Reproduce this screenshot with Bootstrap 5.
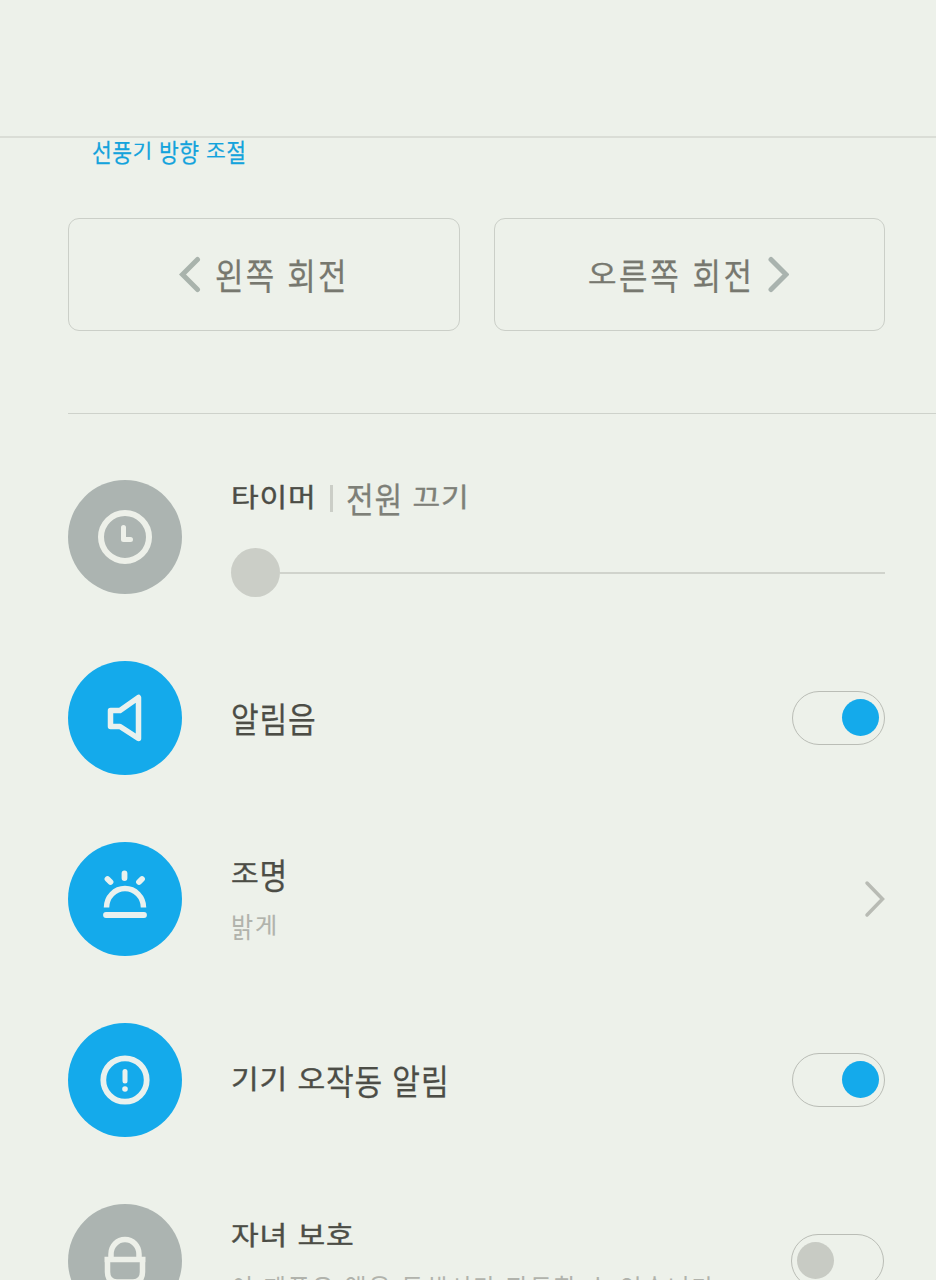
<!DOCTYPE html>
<html lang="ko">
<head>
<meta charset="utf-8">
<meta name="viewport" content="width=device-width, initial-scale=1">
<title>선풍기</title>
<link rel="stylesheet" href="https://cdn.jsdelivr.net/npm/bootstrap@5.3.0/dist/css/bootstrap.min.css">
<style>
  :root { --ink:#4c4d46; --soft:#77786f; --pale:#b1b3ac; --line:#cbcfc8; --blue:#14aaeb; --gray:#acb4b1; }
  body { background:#edf1ea; color:var(--ink); font-family:"Noto Sans CJK KR","Noto Sans",sans-serif; height:1280px; overflow:hidden; }
  .topbar { height:138px; border-bottom:2px solid #daddd6; }
  .content { padding-left:68px; }
  .inner { padding-right:51px; }
  .kr { display:inline-block; white-space:nowrap; line-height:1; transform-origin:0 50%; transform:scaleX(.86); -webkit-text-stroke:.25px currentColor; }
  .kr i { display:inline-block; font-style:normal; transform:scaleY(.76); transform-origin:50% 22%; -webkit-text-stroke:.5px currentColor; }
  .section-label { color:#14a3dc; font-size:25px; letter-spacing:.5px; height:80px; padding-left:24px; line-height:1; }
  .section-label .kr { margin-top:1px; }
  .section-label i, .sub i { -webkit-text-stroke-width:.2px; }
  .turn { height:113px; border:1.5px solid var(--line); border-radius:11px; color:var(--soft); font-size:36px; letter-spacing:2.6px; }
  .turn .kr { padding-bottom:1px; }
  .divider { height:1px; background:#ced2cb; margin-top:82px; }
  .setting { height:181px; padding-top:66px; }
  .disc { width:114px; height:114px; border-radius:50%; background:var(--blue); margin-right:49px; }
  .disc.off { background:var(--gray); }
  .disc svg { display:block; }
  .body-h { height:114px; min-width:0; }
  .title { font-size:35px; letter-spacing:1px; padding-bottom:2px; }
  .sub { font-size:28px; color:var(--pale); letter-spacing:2.2px; -webkit-text-stroke:0; }
  .bar { width:3px; height:27px; background:#cbcec7; }
  .track { height:2px; background:#d0d3cc; }
  .thumb { width:49px; height:49px; border-radius:50%; background:#cbcec7; }
  .toggle { width:93px; height:54px; border:1px solid #babdb6; border-radius:27px; padding:0 5px 1px; margin-bottom:1px; }
  .knob { width:37px; height:37px; border-radius:50%; background:var(--blue); }
  .toggle.off { margin-right:1px; }
  .toggle.off .knob { background:#c8cbc4; }
</style>
</head>
<body>
<header class="topbar"></header>
<main class="content">
  <div class="section-label"><span class="kr">선풍<i>기</i> 방향 <i>조</i>절</span></div>
  <div class="inner d-flex" style="gap:34px">
    <button class="turn btn p-0 flex-fill w-50 d-flex align-items-center">
      <svg width="22" height="38" style="margin-left:110px"><path d="M18.500 3.500L3.500 18.500L18.500 33.500" fill="none" stroke="#a9b3ac" stroke-width="5" stroke-linecap="round"/></svg>
      <span class="kr" style="margin-left:14px">왼쪽 회전</span>
    </button>
    <button class="turn btn p-0 flex-fill w-50 d-flex align-items-center">
      <span class="kr text-start" style="margin-left:93px;width:179px;letter-spacing:3px"><i>오</i>른쪽 회전</span>
      <svg width="22" height="38"><path d="M4 3.500L19 18.500L4 33.500" fill="none" stroke="#a9b3ae" stroke-width="5" stroke-linecap="round"/></svg>
    </button>
  </div>
  <div class="divider"></div>

  <section class="setting inner d-flex">
    <div class="disc off flex-shrink-0"><svg width="114" height="114" fill="none" stroke="#edf0e9"><circle cx="57" cy="57" r="24" stroke-width="6"/><path d="M55.500 47.500V59.500H62.500" stroke-width="5" stroke-linecap="round" stroke-linejoin="round"/></svg></div>
    <div class="body-h flex-grow-1">
      <div class="d-flex align-items-center" style="height:36px">
        <span class="kr title" style="width:99px"><i>타</i><i>이</i><i>머</i></span><span class="bar"></span>
        <span class="kr title" style="margin-left:13px;color:#7e8078">전원 <i>끄</i><i>기</i></span>
      </div>
      <div class="d-flex align-items-center" style="margin-top:32px"><div class="thumb"></div><div class="track flex-grow-1"></div></div>
    </div>
  </section>

  <section class="setting inner d-flex">
    <div class="disc flex-shrink-0"><svg width="114" height="114" fill="none" stroke="#e9f1ee"><path d="M42.500 49.500H52L70.500 36.500V77.500L52 65.500H42.500Z" stroke-width="5.500" stroke-linejoin="round"/></svg></div>
    <div class="body-h flex-grow-1 d-flex align-items-center"><span class="kr title">알림음</span></div>
    <div class="body-h flex-shrink-0 d-flex align-items-center"><div class="toggle d-flex align-items-center justify-content-end"><div class="knob"></div></div></div>
  </section>

  <section class="setting inner d-flex">
    <div class="disc flex-shrink-0"><svg width="114" height="114" fill="none" stroke="#e9f1ee" stroke-linecap="round"><path d="M38.500 65.500A18.500 19 0 0 1 75.500 65.500" stroke-width="5.500" stroke-linecap="butt"/><path d="M38 73H76M56.500 31.500V36M39.500 37L42.500 40M74 37L71 40" stroke-width="5.800"/></svg></div>
    <div class="body-h flex-grow-1">
      <div style="padding-top:14px;line-height:1"><span class="kr title"><i>조</i>명</span></div>
      <div style="padding-top:19px;line-height:1"><span class="kr sub">밝<i>게</i></span></div>
    </div>
    <div class="body-h flex-shrink-0 d-flex align-items-center"><svg width="22" height="38"><path d="M4 3L19.500 19L4 35" fill="none" stroke="#b8bbb4" stroke-width="3.500" stroke-linecap="round"/></svg></div>
  </section>

  <section class="setting inner d-flex">
    <div class="disc flex-shrink-0"><svg width="114" height="114" fill="none" stroke="#e9f1ee"><circle cx="57" cy="57" r="21.700" stroke-width="5.800"/><path d="M57 48.500V58" stroke-width="5" stroke-linecap="round"/><circle cx="57" cy="66" r="2.800" fill="#e9f1ee" stroke="none"/></svg></div>
    <div class="body-h flex-grow-1 d-flex align-items-center"><span class="kr title"><i>기</i><i>기</i> <i>오</i>작동 알림</span></div>
    <div class="body-h flex-shrink-0 d-flex align-items-center"><div class="toggle d-flex align-items-center justify-content-end"><div class="knob"></div></div></div>
  </section>

  <section class="setting inner d-flex">
    <div class="disc off flex-shrink-0"><svg width="114" height="114" fill="none" stroke="#edf0e9" stroke-width="5.500"><path d="M43 54V50A14 14.500 0 0 1 71 50V54M36.500 55.500H77.500M39.500 55V68Q39.500 78 49 78H65Q74.500 78 74.500 68V55"/></svg></div>
    <div class="body-h flex-grow-1">
      <div style="padding-top:14px;line-height:1"><span class="kr title"><i>자</i><i>녀</i> <i>보</i><i>호</i></span></div>
      <div style="padding-top:19px;line-height:1"><span class="kr sub">이 제품은 앱을 통해서만 작동할 수 있습니다</span></div>
    </div>
    <div class="body-h flex-shrink-0 d-flex align-items-center"><div class="toggle off d-flex align-items-center"><div class="knob"></div></div></div>
  </section>
</main>
<script src="https://cdn.jsdelivr.net/npm/bootstrap@5.3.0/dist/js/bootstrap.bundle.min.js"></script>
</body>
</html>
